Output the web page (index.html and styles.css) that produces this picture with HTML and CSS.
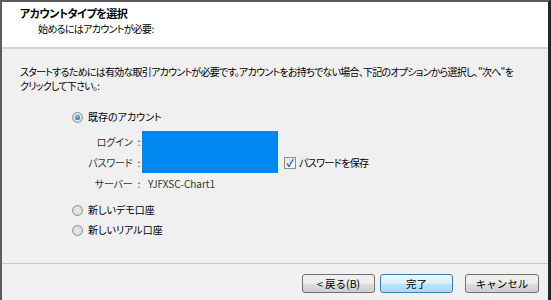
FILE: index.html
```html
<!DOCTYPE html>
<html lang="ja">
<head>
    <meta charset="UTF-8">
    <title>アカウントタイプを選択</title>
    <link rel="stylesheet" href="styles.css">
</head>
<body>

<div class="wizard">
    <div class="header">
        <div class="title">アカウントタイプを選択</div>
        <div class="subtitle">始めるにはアカウントが必要:</div>
    </div>

    <div class="content">
        <p class="intro">スタートするためには有効な取引アカウントが必要です。アカウントをお持ちでない場合、下記のオプションから選択し、"次へ"を<br>クリックして下さい。:</p>

        <div class="options">
            <label class="option first">
                <span class="radio checked"></span>既存のアカウント
            </label>

            <div class="account-grid">
                <span class="field-label login">ログイン<span class="colon">:</span></span>
                <div class="masked"></div>
                <span class="field-label pass">パスワード<span class="colon">:</span></span>
                <label class="save-pass"><span class="checkbox">&#10003;</span>パスワードを保存</label>
                <span class="field-label server-label">サーバー<span class="colon">:</span></span>
                <span class="server">YJFXSC-Chart1</span>
            </div>

            <label class="option demo">
                <span class="radio"></span>新しいデモ口座
            </label>
            <label class="option real">
                <span class="radio"></span>新しいリアル口座
            </label>
        </div>
    </div>

    <div class="footer">
        <button class="btn back">&lt; 戻る(B)</button>
        <button class="btn finish">完了</button>
        <button class="btn cancel">キャンセル</button>
    </div>
</div>

</body>
</html>
```

FILE: styles.css
```css
body {
    margin: 0;
    font-family: "Noto Sans CJK JP", "Liberation Sans", sans-serif;
    font-size: 10px;
    font-feature-settings: "palt";
    color: #000;
    background: #f0f0f0;
}
.wizard {
    width: 551px;
    height: 300px;
    box-sizing: border-box;
    border-top: 2px solid #5c5c5c;
    border-left: 2px solid #5c5c5c;
    border-right: 3px solid #262626;
    display: flex;
    flex-direction: column;
    background: #f0f0f0;
    overflow: hidden;
}
.header {
    height: 47px;
    background: #fff;
    border-bottom: 2px solid #d5d5d5;
    padding: 4px 0 0 18px;
    box-sizing: border-box;
}
.title {
    font-weight: bold;
    font-size: 11px;
    letter-spacing: -0.5px;
    line-height: 15px;
}
.subtitle {
    padding-left: 18px;
    line-height: 15px;
    letter-spacing: -0.7px;
}
.content {
    flex: 1;
    padding: 0 0 0 18px;
}
.intro {
    margin: 16px 0 0;
    line-height: 14px;
    letter-spacing: -0.75px;
    white-space: nowrap;
}
.options {
    padding-left: 52px;
    margin-top: 17px;
}
.option {
    display: flex;
    align-items: center;
    height: 14px;
    line-height: 14px;
}
.radio {
    width: 9px;
    height: 9px;
    border: 1px solid #8d8d8d;
    border-radius: 50%;
    background: radial-gradient(circle, #ececec 0, #dcdcdc 60%, #f4f4f4 100%);
    margin-right: 5px;
    position: relative;
}
.radio.checked::after {
    content: "";
    position: absolute;
    left: 2px;
    top: 2px;
    width: 5px;
    height: 5px;
    border-radius: 50%;
    background: radial-gradient(circle at 40% 35%, #7fc8f6 0, #1a74c0 70%);
}
.account-grid {
    display: grid;
    grid-template-columns: 120px 136px auto;
    grid-template-rows: 21px 21px 20px;
    column-gap: 2px;
    margin: 7px 0 0 -52px;
    align-items: center;
}
.field-label {
    grid-column: 1;
    text-align: right;
    color: #333;
    letter-spacing: -0.2px;
}
.colon {
    margin-left: 5px;
}
.field-label.login {
    grid-row: 1;
}
.field-label.pass {
    grid-row: 2;
}
.field-label.server-label {
    grid-row: 3;
}
.masked {
    grid-row: 1 / 3;
    grid-column: 2;
    align-self: stretch;
    background: #0088f0;
}
.save-pass {
    grid-column: 3;
    grid-row: 2;
    display: flex;
    align-items: center;
    padding-left: 4px;
    letter-spacing: -0.6px;
}
.checkbox {
    width: 10px;
    height: 10px;
    border: 1px solid #8f8f8f;
    background: linear-gradient(#e4e4e4, #f6f6f6);
    color: #1f4f8f;
    font-size: 10px;
    line-height: 10px;
    text-align: center;
    font-weight: bold;
    margin-right: 3px;
    letter-spacing: 0;
}
.server {
    grid-column: 2;
    grid-row: 3;
    padding-left: 6px;
    color: #333;
}
.option.demo {
    margin-top: 10px;
}
.option.real {
    margin-top: 6px;
}
.footer {
    height: 37px;
    border-top: 1px solid #c8c8c8;
    display: flex;
    align-items: flex-start;
    padding: 10px 0 0 300px;
    box-sizing: border-box;
}
.btn {
    font-family: "Noto Sans CJK JP", "Liberation Sans", sans-serif;
    font-size: 10.5px;
    height: 19px;
    width: 73px;
    padding: 0;
    border: 1px solid #707070;
    border-radius: 3px;
    background: linear-gradient(#f2f2f2 0, #ebebeb 50%, #dddddd 51%, #cfcfcf 100%);
    color: #000;
}
.btn.finish {
    margin-left: 5px;
    border-color: #3c7fb1;
    background: linear-gradient(#eaf6fd 0, #d9f0fc 50%, #bee6fd 51%, #a7d9f5 100%);
}
.btn.cancel {
    margin-left: 12px;
    width: 74px;
}
```
